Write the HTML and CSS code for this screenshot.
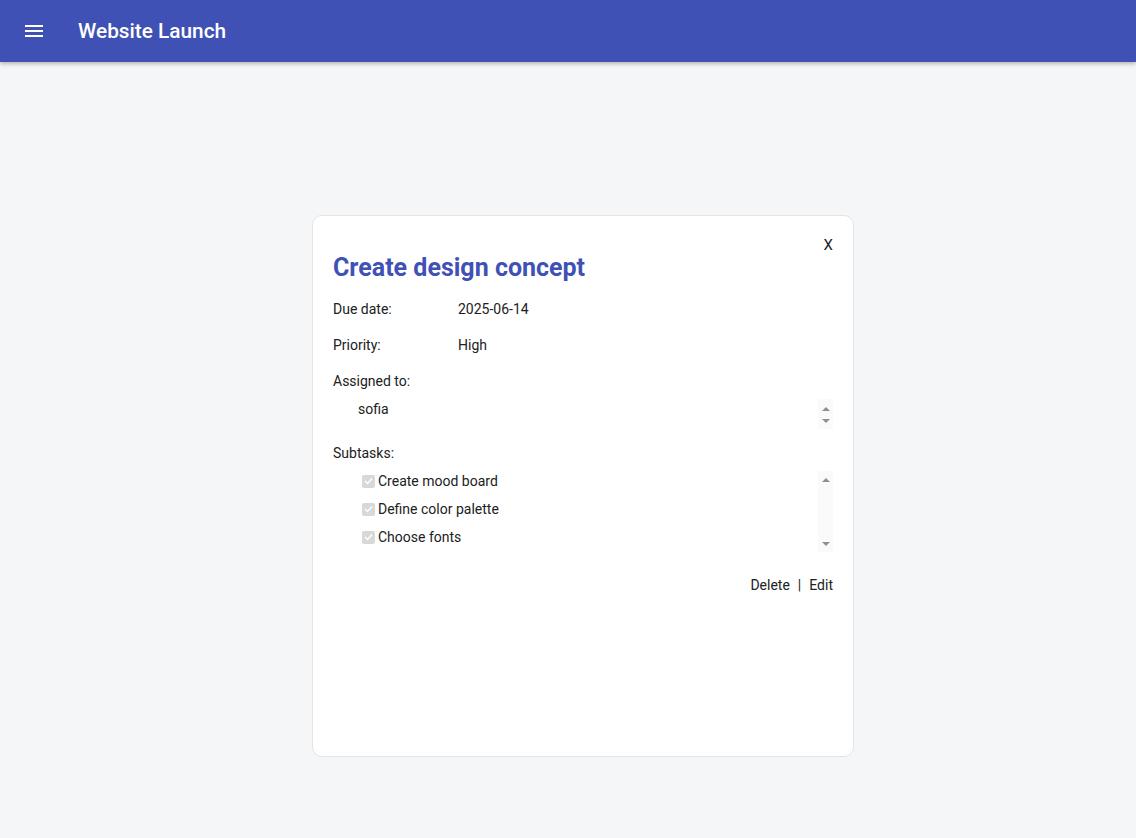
FILE: index.html
```html
<!DOCTYPE html>
<html>
<head>
<meta charset="utf-8">
<link rel="stylesheet" href="styles.css">
</head>
<body>
<header class="topbar">
  <button class="menu-btn" aria-label="Menu">
    <svg width="18" height="14" viewBox="0 0 18 14"><rect x="0" y="1" width="18" height="2" fill="#fff"/><rect x="0" y="6" width="18" height="2" fill="#fff"/><rect x="0" y="11" width="18" height="2" fill="#fff"/></svg>
  </button>
  <h1 class="app-title">Website Launch</h1>
</header>
<main class="main">
  <section class="card">
    <div class="close-row"><span class="close">X</span></div>
    <h2 class="task-title">Create design concept</h2>
    <div class="field"><span class="label">Due date:</span><span class="value">2025-06-14</span></div>
    <div class="field"><span class="label">Priority:</span><span class="value">High</span></div>
    <div class="field"><span class="label">Assigned to:</span></div>
    <div class="listbox assign">
      <div class="list-items"><div class="option">sofia</div></div>
      <div class="scrollbar short"><span class="arrow up"></span><span class="arrow down"></span></div>
    </div>
    <div class="field subtasks-label"><span class="label">Subtasks:</span></div>
    <div class="listbox subtasks">
      <ul class="list-items">
        <li class="subtask"><span class="check"><svg width="9" height="8" viewBox="0 0 9 8"><path d="M1 4 L3.5 6.5 L8 1.5" fill="none" stroke="#fff" stroke-width="1.4"/></svg></span>Create mood board</li>
        <li class="subtask"><span class="check"><svg width="9" height="8" viewBox="0 0 9 8"><path d="M1 4 L3.5 6.5 L8 1.5" fill="none" stroke="#fff" stroke-width="1.4"/></svg></span>Define color palette</li>
        <li class="subtask"><span class="check"><svg width="9" height="8" viewBox="0 0 9 8"><path d="M1 4 L3.5 6.5 L8 1.5" fill="none" stroke="#fff" stroke-width="1.4"/></svg></span>Choose fonts</li>
      </ul>
      <div class="scrollbar tall"><span class="arrow up"></span><span class="arrow down"></span></div>
    </div>
    <div class="actions"><span class="action">Delete</span><span class="sep">|</span><span class="action">Edit</span></div>
  </section>
</main>
</body>
</html>
```
FILE: styles.css
```css
* { box-sizing: border-box; }
html, body { margin: 0; padding: 0; }
body {
  background: #f5f6f8;
  font-family: Roboto, "Liberation Sans", sans-serif;
  color: #212121;
  font-size: 14px;
  min-height: 838px;
}
.topbar {
  height: 62px;
  background: #3f51b5;
  display: flex;
  align-items: center;
  box-shadow: 0 2px 4px rgba(0,0,0,0.25);
  position: relative;
}
.menu-btn {
  background: none;
  border: 0;
  padding: 0;
  margin-left: 25px;
  width: 18px;
  height: 14px;
  display: flex;
}
.app-title {
  margin: 0 0 0 35px;
  color: #fff;
  font-size: 20.8px;
  font-weight: 500;
}
.main {
  padding: 153px 0 0 312px;
}
.card {
  width: 542px;
  height: 542px;
  background: #fff;
  border: 1px solid #e4e4e6;
  border-radius: 10px;
  padding: 19px 20px;
}
.close-row {
  display: flex;
  justify-content: flex-end;
  line-height: 20px;
  height: 20px;
}
.close {
  font-size: 15px;
  color: #222;
}
.task-title {
  margin: 0 0 18px 0;
  color: #3f51b5;
  font-size: 25px;
  font-weight: 700;
  line-height: 26px;
}
.field {
  display: flex;
  line-height: 20px;
  margin-bottom: 16px;
}
.label { width: 125px; }
.field + .listbox { margin-top: -9px; }
.listbox {
  display: flex;
  justify-content: space-between;
}
.list-items {
  list-style: none;
  margin: 0;
  padding: 0 0 0 25px;
}
.option { line-height: 20px; padding-top: 1px; }
.assign { height: 34px; margin-bottom: 11px; }
.subtasks-label { margin-bottom: 13px; }
.subtasks { height: 84px; }
.subtask {
  display: flex;
  align-items: center;
  height: 28px;
  line-height: 20px;
}
.check {
  width: 13px;
  height: 13px;
  margin: 0 3px 0 4px;
  background: #d8d8d8;
  border-radius: 2px;
  display: flex;
  align-items: center;
  justify-content: center;
}
.scrollbar {
  width: 15px;
  background: #fafafa;
  display: flex;
  flex-direction: column;
  justify-content: space-between;
  align-items: center;
}
.scrollbar.short { height: 30px; padding: 8px 0 6px; margin-top: 1px; }
.scrollbar.tall { height: 81px; padding: 7px 0 6px; margin-top: 4px; }
.arrow { width: 0; height: 0; border-left: 4px solid transparent; border-right: 4px solid transparent; }
.arrow.up { border-bottom: 4px solid #8f8f8f; }
.arrow.down { border-top: 4px solid #8f8f8f; }
.actions {
  display: flex;
  justify-content: flex-end;
  line-height: 20px;
  margin-top: 24px;
}
.sep { margin: 0 8px; }
```
